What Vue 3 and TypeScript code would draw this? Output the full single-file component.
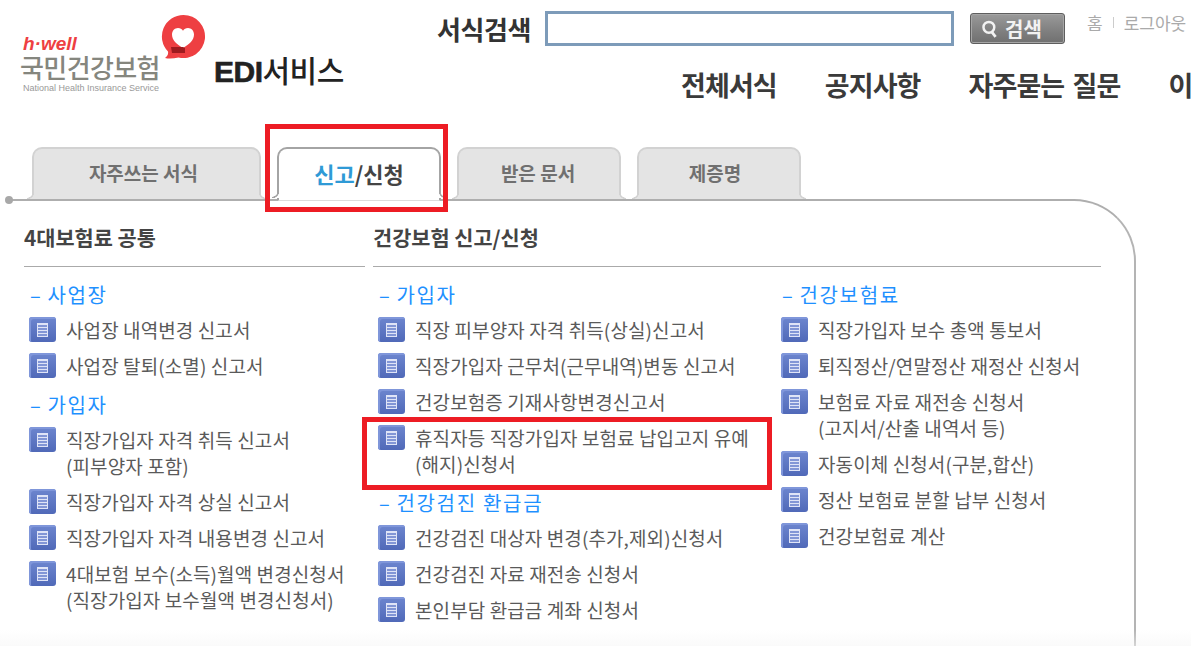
<template>
  <div class="page">
    <header class="header">
      <div class="brand">
        <div class="logo">
          <span class="logo-well">h·well</span>
          <span class="logo-name">국민건강보험</span>
          <span class="logo-en">National Health Insurance Service</span>
          <svg class="logo-heart" viewBox="0 0 46 46" width="46" height="46">
            <path d="M23.5 1a21.5 21.500 0 1 1-5 42.400C14 44.500 9 45 5 44c2.500-2 3.500-4 3-6.500A21.500 21.500 0 0 1 23.500 1z" fill="#ee3f42" />
            <path d="M23 34c-6.500-3.800-11-8-11-13.500 0-3.700 2.700-6.500 6-6.500 2.200 0 3.900 1 5 2.800 1.100-1.800 2.800-2.800 5-2.800 3.300 0 6 2.800 6 6.500C34 26 29.500 30.200 23 34z" fill="#fff" />
            <path d="M11 33h12l2 1v5H12z" fill="#9e1b1f" />
          </svg>
        </div>
        <span class="service"><b>EDI</b>서비스</span>
      </div>
      <div class="top">
        <div class="search-row">
          <span class="search-label">서식검색</span>
          <input class="search-input" type="text" />
          <button class="search-btn" type="button">
            <svg viewBox="0 0 16 16" width="18" height="18">
              <circle cx="7" cy="6.500" r="4.800" fill="none" stroke="#f2f2f2" stroke-width="2.200" />
              <path d="M9.500 10.500l3.500 4.500" stroke="#f2f2f2" stroke-width="2.400" />
            </svg>
            검색
          </button>
          <div class="util">
            <span>홈</span>
            <i></i>
            <span>로그아웃</span>
          </div>
        </div>
        <nav class="nav">
          <a v-for="item in navItems" :key="item">{{ item }}</a>
        </nav>
      </div>
    </header>

    <div class="tabs">
      <div class="tab wide"><span>자주쓰는 서식</span></div>
      <div class="tab active"><span><em>신고</em>/신청</span></div>
      <div class="tab"><span class="nudge-a">받은 문서</span></div>
      <div class="tab"><span class="nudge-b">제증명</span></div>
    </div>

    <section class="panel">
      <span class="dot"></span>
      <div class="col-left">
        <h2>4대보험료 공통</h2>
        <div class="col-body">
          <div v-for="group in leftGroups" :key="group.title" class="group">
            <h3><span class="dash">–</span>{{ group.title }}</h3>
            <ul>
              <li v-for="row in group.rows" :key="row">
                <span class="doc"><span></span></span>
                <span class="label">{{ row }}</span>
              </li>
            </ul>
          </div>
        </div>
      </div>
      <div class="col-right">
        <h2>건강보험 신고/신청</h2>
        <div class="col-body split">
          <div class="sub">
            <div v-for="group in midGroups" :key="group.title" class="group">
              <h3><span class="dash">–</span>{{ group.title }}</h3>
              <ul>
                <li v-for="row in group.rows" :key="row">
                  <span class="doc"><span></span></span>
                  <span class="label">{{ row }}</span>
                </li>
              </ul>
            </div>
          </div>
          <div class="sub">
            <div v-for="group in rightGroups" :key="group.title" class="group">
              <h3><span class="dash">–</span>{{ group.title }}</h3>
              <ul>
                <li v-for="row in group.rows" :key="row">
                  <span class="doc"><span></span></span>
                  <span class="label">{{ row }}</span>
                </li>
              </ul>
            </div>
          </div>
        </div>
      </div>
    </section>

    <div class="mark mark-tab"></div>
    <div class="mark mark-row"></div>
  </div>
</template>

<script setup lang="ts">
interface IGroup {
  title: string;
  rows: string[];
}

const navItems: string[] = ['전체서식', '공지사항', '자주묻는 질문', '이용안내'];

const leftGroups: IGroup[] = [
  {
    title: '사업장',
    rows: ['사업장 내역변경 신고서', '사업장 탈퇴(소멸) 신고서'],
  },
  {
    title: '가입자',
    rows: [
      '직장가입자 자격 취득 신고서\n(피부양자 포함)',
      '직장가입자 자격 상실 신고서',
      '직장가입자 자격 내용변경 신고서',
      '4대보험 보수(소득)월액 변경신청서\n(직장가입자 보수월액 변경신청서)',
    ],
  },
];

const midGroups: IGroup[] = [
  {
    title: '가입자',
    rows: [
      '직장 피부양자 자격 취득(상실)신고서',
      '직장가입자 근무처(근무내역)변동 신고서',
      '건강보험증 기재사항변경신고서',
      '휴직자등 직장가입자 보험료 납입고지 유예\n(해지)신청서',
    ],
  },
  {
    title: '건강검진 환급금',
    rows: ['건강검진 대상자 변경(추가,제외)신청서', '건강검진 자료 재전송 신청서', '본인부담 환급금 계좌 신청서'],
  },
];

const rightGroups: IGroup[] = [
  {
    title: '건강보험료',
    rows: [
      '직장가입자 보수 총액 통보서',
      '퇴직정산/연말정산 재정산 신청서',
      '보험료 자료 재전송 신청서\n(고지서/산출 내역서 등)',
      '자동이체 신청서(구분,합산)',
      '정산 보험료 분할 납부 신청서',
      '건강보험료 계산',
    ],
  },
];
</script>

<style>
html,
body {
  margin: 0;
  background: #fff;
}
</style>

<style scoped>
.page {
  position: relative;
  width: 1191px;
  height: 646px;
  overflow: hidden;
  font-family: "Noto Sans CJK KR", "Noto Sans", sans-serif;
  color: #555;
}
.page::after {
  content: "";
  position: absolute;
  left: 0;
  right: 0;
  bottom: 0;
  height: 16px;
  background: linear-gradient(rgba(245, 245, 245, 0), rgba(245, 245, 245, 0.5));
}
.header {
  display: flex;
  height: 147px;
}
.brand {
  display: flex;
  width: 437px;
  flex-shrink: 0;
}
.logo {
  position: relative;
  width: 214px;
  height: 92px;
  padding: 35px 0 0 20px;
  box-sizing: border-box;
}
.logo span {
  display: block;
}
.logo-well {
  margin-left: 3px;
  font-family: "Liberation Sans", sans-serif;
  font-size: 19px;
  line-height: 18px;
  font-weight: 700;
  font-style: italic;
  color: #ee3f42;
}
.logo-name {
  font-size: 26px;
  line-height: 28px;
  letter-spacing: -0.600px;
  font-weight: 500;
  color: #85867e;
  white-space: nowrap;
}
.logo-en {
  margin: 3px 0 0 3px;
  font-family: "Liberation Sans", sans-serif;
  font-size: 9px;
  line-height: 9px;
  color: #999;
  white-space: nowrap;
}
.logo-heart {
  position: absolute;
  left: 160px;
  top: 14px;
}
.service {
  margin-top: 47px;
  font-size: 30px;
  line-height: 44px;
  font-weight: 500;
  color: #222;
  letter-spacing: -0.500px;
  white-space: nowrap;
}
.service b {
  font-family: "Liberation Sans", sans-serif;
  font-weight: 700;
  -webkit-text-stroke: 0.600px #222;
}
.top {
  flex: 1;
  min-width: 0;
}
.search-row {
  display: flex;
  align-items: flex-start;
  margin-top: 11px;
  height: 35px;
}
.search-label {
  width: 108px;
  font-size: 26px;
  line-height: 35px;
  font-weight: 700;
  letter-spacing: -0.400px;
  color: #333;
  white-space: nowrap;
}
.search-input {
  width: 409px;
  height: 35px;
  box-sizing: border-box;
  border: 3px solid #7d9bb9;
  background: #fff;
  outline: none;
}
.search-btn {
  display: flex;
  align-items: center;
  gap: 6px;
  width: 95px;
  height: 31px;
  margin: 2px 0 0 16px;
  padding: 0 0 0 10px;
  box-sizing: border-box;
  border: 1px solid #5e5e5e;
  border-radius: 3px;
  background: linear-gradient(#9a9a9a, #7f7f7f 60%, #707070);
  box-shadow: inset 0 0 0 1px #a6a6a6;
  color: #f2f2f2;
  font-family: inherit;
  font-size: 20px;
  line-height: 26px;
  font-weight: 700;
}
.util {
  display: flex;
  align-items: center;
  margin: 0 0 0 22px;
  height: 22px;
  font-size: 17px;
  color: #aaa;
  white-space: nowrap;
}
.util i {
  width: 1px;
  height: 11px;
  margin: 0 10px;
  background: #ccc;
}
.nav {
  display: flex;
  gap: 48px;
  margin: 22px 0 0 244px;
  font-size: 27px;
  line-height: 34px;
  font-weight: 700;
  color: #3a3a3a;
  letter-spacing: -0.900px;
  word-spacing: 3px;
  white-space: nowrap;
}
.tabs {
  position: relative;
  z-index: 1;
  display: flex;
  gap: 16px;
  height: 52px;
  margin-left: 32px;
}
.tab {
  position: relative;
  width: 164px;
  height: 52px;
  box-sizing: border-box;
  border: 2px solid #d2d2d2;
  border-bottom: 0;
  border-radius: 10px 10px 0 0;
  background: #e4e4e4;
  text-align: center;
  font-size: 19px;
  line-height: 48px;
  font-weight: 700;
  color: #707070;
}
.tab::before,
.tab::after {
  content: "";
  position: absolute;
  bottom: 0;
  width: 7px;
  height: 7px;
}
.tab::before {
  left: -7px;
  background: radial-gradient(circle at 0 0, transparent 5.500px, #d2d2d2 6px, #d2d2d2 7px, #e4e4e4 7.500px);
}
.tab::after {
  right: -7px;
  background: radial-gradient(circle at 100% 0, transparent 5.500px, #d2d2d2 6px, #d2d2d2 7px, #e4e4e4 7.500px);
}
.tab.wide {
  width: 229px;
}
.tab.wide span {
  margin-right: 6px;
}
.nudge-a {
  margin-right: 2px;
}
.nudge-b {
  margin-right: 8px;
}
.tab.active {
  height: 54px;
  border-color: #a4a4a4;
  border-bottom: 1px solid #dcdcdc;
  background: #fff;
  font-size: 22px;
  font-weight: 700;
  color: #444;
}
.tab.active::before {
  bottom: 2px;
  background: radial-gradient(circle at 0 0, transparent 5.500px, #a4a4a4 6px, #a4a4a4 7px, #fff 7.500px);
}
.tab.active::after {
  bottom: 2px;
  background: radial-gradient(circle at 100% 0, transparent 5.500px, #a4a4a4 6px, #a4a4a4 7px, #fff 7.500px);
}
.tab em {
  font-style: normal;
  color: #2f9ad6;
}
.panel {
  position: relative;
  display: flex;
  gap: 8px;
  width: 1126px;
  height: 447px;
  box-sizing: border-box;
  margin-left: 10px;
  padding: 17px 0 0 14px;
  border-top: 2px solid #aeaeae;
  border-right: 2px solid #b4b4b4;
  border-top-right-radius: 62px;
}
.dot {
  position: absolute;
  left: -5px;
  top: -5px;
  width: 8px;
  height: 8px;
  border-radius: 50%;
  background: #a8a8a8;
}
.col-left {
  width: 341px;
}
.col-right {
  width: 728px;
}
h2 {
  height: 49px;
  margin: 0;
  border-bottom: 1px solid #aaa;
  font-size: 20.800px;
  line-height: 38px;
  font-weight: 700;
  color: #444;
  box-sizing: border-box;
}
.col-body {
  padding: 8px 0 0 5px;
}
.split {
  display: flex;
}
.sub {
  width: 403px;
  flex-shrink: 0;
}
.group {
  margin-bottom: 2px;
}
h3 {
  height: 36px;
  margin: 0;
  padding-left: 1px;
  font-size: 20px;
  line-height: 39px;
  font-weight: 400;
  letter-spacing: 1.700px;
  color: #1e90ff;
  white-space: nowrap;
}
.dash {
  margin-right: 5px;
}
ul {
  margin: 0;
  padding: 0;
  list-style: none;
}
li {
  display: flex;
  gap: 10px;
  padding: 6px 0 4px;
}
.doc {
  display: flex;
  align-items: center;
  justify-content: center;
  width: 27px;
  height: 25px;
  flex-shrink: 0;
  border-radius: 3px;
  background: linear-gradient(#6d86cf, #5069b8);
  box-shadow: inset 2px 2px 0 #7f96da;
}
.doc span {
  width: 9px;
  height: 12px;
  border: 1px solid #dfe4f7;
  background: repeating-linear-gradient(#dfe4f7 0 1px, #8296d6 1px 3px);
}
.label {
  font-size: 19px;
  line-height: 26px;
  letter-spacing: 0.100px;
  white-space: pre-line;
  color: #5a5a5a;
}
.mark {
  position: absolute;
  z-index: 2;
  box-sizing: border-box;
  border: 5px solid #ed1c24;
  pointer-events: none;
}
.mark-tab {
  left: 265px;
  top: 124px;
  width: 183px;
  height: 88px;
}
.mark-row {
  left: 362px;
  top: 417px;
  width: 410px;
  height: 73px;
}
</style>
